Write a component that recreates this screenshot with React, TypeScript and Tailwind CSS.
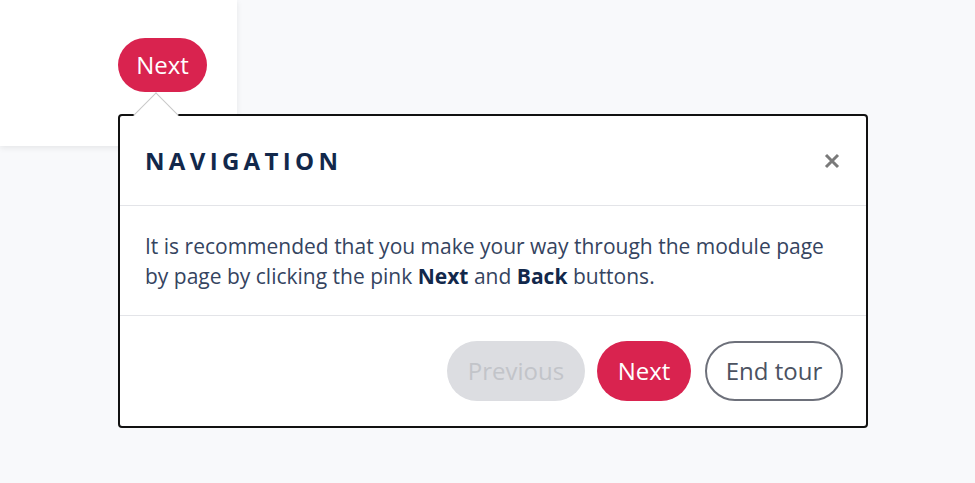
export default function App() {
  return (
    <div className="relative h-[483px] w-full overflow-hidden bg-[#f8f9fb] font-['Open_Sans','Noto_Sans',sans-serif]">
      {/* page card with the anchor button */}
      <div className="h-[146px] w-[237px] bg-white pl-[118px] pt-[38px] shadow-[0_2px_6px_rgba(0,0,0,0.08)]">
        <button className="flex h-[54px] w-[89px] items-center justify-center rounded-full bg-[#d9234f] text-[24px] text-white">
          Next
        </button>
      </div>

      {/* tour step popover */}
      <div className="absolute left-[118px] top-[114px] w-[750px] rounded-[4px] border-2 border-[#111] bg-white">
        <div className="absolute left-[20px] top-[-17px] z-10 h-[32px] w-[32px] rotate-45 border-l border-t border-[#c8c8c8] bg-white" />

        <div className="flex h-[90px] items-center justify-between border-b border-[#e3e4e8] pl-[25px] pr-[26px]">
          <h2 className="text-[24px] font-bold tracking-[0.18em] text-[#12284b]">NAVIGATION</h2>
          <button className="text-[#7a7a7a]">
            <svg width="16" height="16" viewBox="0 0 16 16" fill="none" stroke="currentColor" strokeWidth="3">
              <path d="M2 2 14 14M14 2 2 14" />
            </svg>
          </button>
        </div>

        <div className="flex h-[110px] items-center border-b border-[#e3e4e8] px-[25px]">
          <p className="text-[21px] leading-[30px] text-[#35445f]">
            It is recommended that you make your way through the module page by page by clicking the pink{" "}
            <strong className="font-bold text-[#12284b]">Next</strong> and{" "}
            <strong className="font-bold text-[#12284b]">Back</strong> buttons.
          </p>
        </div>

        <div className="flex h-[110px] items-center justify-end gap-[12px] pr-[23px]">
          <button className="h-[60px] w-[138px] rounded-full bg-[#dcdde1] text-[24px] text-[#c2c4c9]">
            Previous
          </button>
          <button className="h-[60px] w-[94px] rounded-full bg-[#d9234f] text-[24px] text-white">
            Next
          </button>
          <button className="ml-[2px] h-[60px] w-[138px] rounded-full border-[2.5px] border-[#6d707a] text-[24px] text-[#4b5261]">
            End tour
          </button>
        </div>
      </div>
    </div>
  );
}
